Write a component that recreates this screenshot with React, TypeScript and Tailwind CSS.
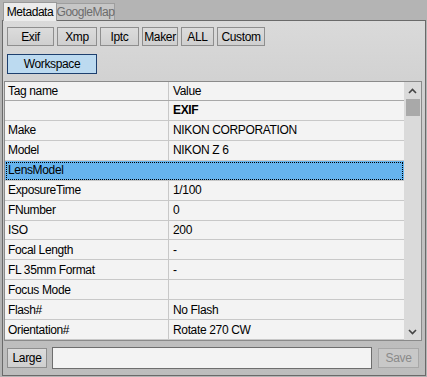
import React from "react";

const rows: { tag: string; value: string; bold?: boolean; selected?: boolean }[] = [
  { tag: "", value: "EXIF", bold: true },
  { tag: "Make", value: "NIKON CORPORATION" },
  { tag: "Model", value: "NIKON Z 6" },
  { tag: "LensModel", value: "", selected: true },
  { tag: "ExposureTime", value: "1/100" },
  { tag: "FNumber", value: "0" },
  { tag: "ISO", value: "200" },
  { tag: "Focal Length", value: "-" },
  { tag: "FL 35mm Format", value: "-" },
  { tag: "Focus Mode", value: "" },
  { tag: "Flash#", value: "No Flash" },
  { tag: "Orientation#", value: "Rotate 270 CW" },
];

function Btn({ label, w }: { label: string; w: string }) {
  return (
    <div
      className={`${w} h-[19px] border border-[#8e8e8e] bg-gradient-to-b from-[#dcdcdc] to-[#cfcfcf] flex items-center justify-center text-[12px] tracking-[-0.35px] text-black leading-none`}
    >
      {label}
    </div>
  );
}

export default function App() {
  return (
    <div
      className="w-[427px] h-[377px] bg-[#b4b4b4] flex flex-col overflow-hidden"
      style={{ fontFamily: '"Liberation Sans", Arial, sans-serif' }}
    >
      {/* tabs */}
      <div className="h-[20px] flex items-end pl-[3px] relative z-10">
        <div className="w-[54px] h-[19px] bg-[#ececec] border border-b-0 border-[#9a9a9a] flex items-center justify-center text-[12px] tracking-[-0.45px] text-black mb-[-1px] relative">
          Metadata
        </div>
        <div className="w-[58px] h-[17px] bg-[#c6c6c6] border border-l-0 border-b-0 border-[#9e9e9e] flex items-center justify-center text-[12px] tracking-[-0.45px] text-[#6c6c6c]">
          GoogleMap
        </div>
      </div>
      {/* panel */}
      <div className="ml-[2px] w-[424px] h-[356px] border border-[#6a6a6a] bg-gradient-to-b from-[#dadada] via-[#c2c2c2] to-[#bdbdbd] flex flex-col pl-[1px]">
        <div className="flex gap-[3px] pl-[3px] pt-[6px]">
          <Btn label="Exif" w="w-[47px]" />
          <Btn label="Xmp" w="w-[40px]" />
          <Btn label="Iptc" w="w-[39px]" />
          <Btn label="Maker" w="w-[36px]" />
          <Btn label="ALL" w="w-[33px]" />
          <Btn label="Custom" w="w-[48px]" />
        </div>
        <div className="pl-[3px] pt-[8px]">
          <div className="w-[90px] h-[20px] border border-[#1d3f6e] bg-[#bcdaf0] flex items-center justify-center text-[12px] tracking-[-0.35px] text-black">
            Workspace
          </div>
        </div>
        {/* table */}
        <div className="mt-[7px] w-[418px] h-[260px] border border-[#8a8a8a] bg-[#f3f3f3] flex tracking-[-0.35px]">
          <div className="flex-1 flex flex-col">
            <div className="h-[19px] flex border-b border-[#a8a8a8] text-[12px] text-black">
              <div className="w-[164px] border-r border-[#c8c8c8] pl-[3px] flex items-center">Tag name</div>
              <div className="flex-1 pl-[4px] flex items-center">Value</div>
            </div>
            {rows.map((r, i) => (
              <div
                key={i}
                className={`h-[20px] flex border-b border-[#c8c8c8] text-[12px] text-black ${
                  r.selected ? "bg-[#66b4ee] outline outline-1 outline-dotted outline-black -outline-offset-2" : ""
                }`}
              >
                <div
                  className={`w-[164px] pl-[3px] flex items-center ${
                    r.selected ? "" : "border-r border-[#c8c8c8]"
                  }`}
                >
                  {r.tag}
                </div>
                <div className={`flex-1 pl-[4px] flex items-center ${r.bold ? "font-bold" : ""}`}>{r.value}</div>
              </div>
            ))}
          </div>
          {/* scrollbar */}
          <div className="w-[17px] bg-[#dadada] flex flex-col items-center">
            <div className="h-[17px] w-full flex items-center justify-center">
              <svg width="9" height="6" viewBox="0 0 9 6">
                <path d="M1 5 L4.5 1.5 L8 5" stroke="#444" strokeWidth="1.6" fill="none" />
              </svg>
            </div>
            <div className="w-[14px] h-[17px] bg-[#a9a9a9]" />
            <div className="flex-1" />
            <div className="h-[17px] w-full flex items-center justify-center">
              <svg width="9" height="6" viewBox="0 0 9 6">
                <path d="M1 1 L4.5 4.5 L8 1" stroke="#444" strokeWidth="1.6" fill="none" />
              </svg>
            </div>
          </div>
        </div>
        {/* bottom */}
        <div className="flex items-center pl-[3px] pt-[6px] gap-[5px]">
          <div className="w-[40px] h-[20px] border border-[#8e8e8e] bg-gradient-to-b from-[#dcdcdc] to-[#cfcfcf] flex items-center justify-center text-[12px] tracking-[-0.35px] text-black">
            Large
          </div>
          <div className="w-[320px] h-[22px] border border-[#6e6e6e] bg-[#f3f3f3]" />
          <div className="ml-[1px] w-[41px] h-[20px] border border-[#a8a8a8] bg-[#c8c8c8] flex items-center justify-center text-[12px] tracking-[-0.35px] text-[#8a8a8a]">
            Save
          </div>
        </div>
      </div>
    </div>
  );
}
